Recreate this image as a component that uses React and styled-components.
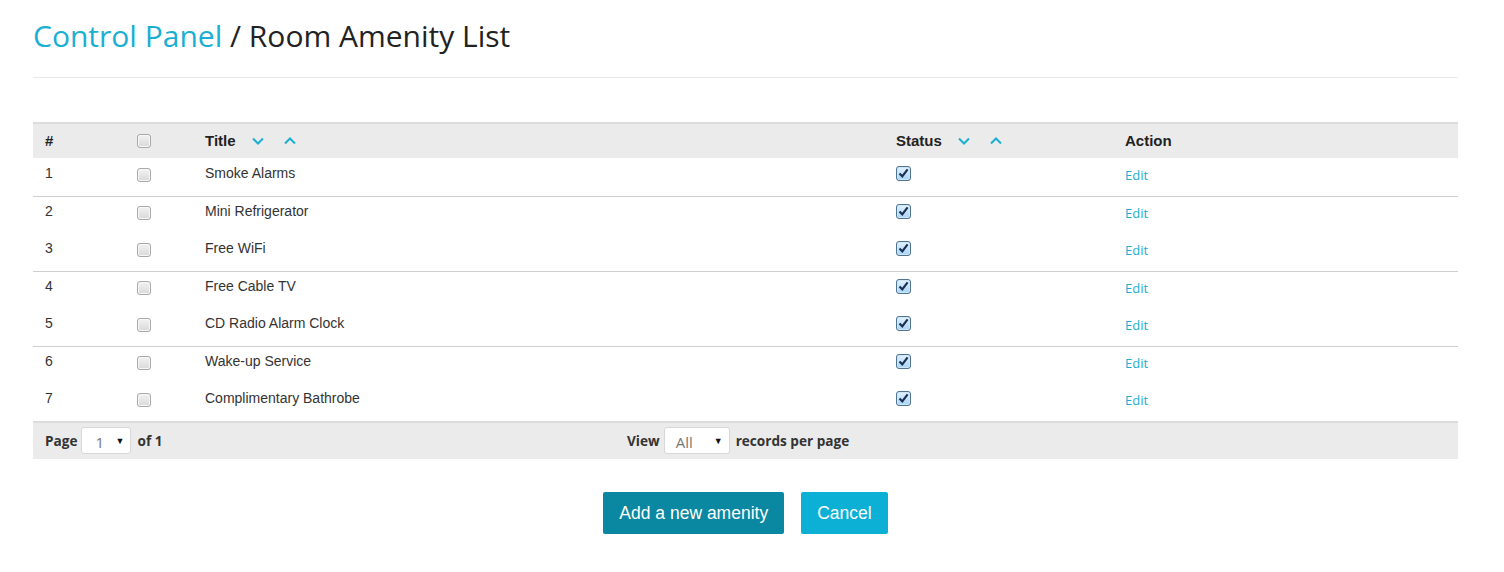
import styled, { createGlobalStyle } from "styled-components";

const GlobalStyle = createGlobalStyle`
  body {
    margin: 0;
    background: #fff;
    font-family: Arial, "Liberation Sans", sans-serif;
    color: #333;
  }
`;

const Page = styled.div`
  padding: 0 46px 0 33px;
`;

const Heading = styled.h1`
  margin: 0;
  padding: 16px 0 21px;
  font-family: "Open Sans", sans-serif;
  font-weight: 400;
  font-size: 30px;
  line-height: 40px;
  color: #222;
  border-bottom: 1px solid #eaeaea;
`;

const Crumb = styled.span`
  color: #1aafd2;
`;

const Grid = styled.table`
  width: 100%;
  margin-top: 44px;
  border-collapse: collapse;
  border-top: 2px solid #dcdcdc;
`;

const HeadRow = styled.tr`
  background: #ebebeb;
  height: 35px;
`;

const Th = styled.th`
  text-align: left;
  padding: 0 12px 1px;
  font-size: 15px;
  font-weight: bold;
  color: #222;
  width: ${(p) => p.$w || "auto"};
`;

const HeadInner = styled.div`
  display: flex;
  align-items: center;
`;

const SortBtn = styled.span`
  display: inline-flex;
  margin-left: ${(p) => p.$gap}px;
  color: #1aafd2;
`;

const Row = styled.tr`
  height: ${(p) => (p.$odd ? 38 : 37)}px;
  border-top: ${(p) => (p.$line ? "1px solid #cfcfcf" : "none")};
`;

const Td = styled.td`
  vertical-align: top;
  padding: ${(p) => (p.$line ? 6 : 7)}px 12px 0;
  font-size: 14px;
  color: #333;
`;

const EditLink = styled.a`
  font-family: "Open Sans", sans-serif;
  font-size: 13px;
  color: #1aafd2;
  text-decoration: none;
  position: relative;
  top: 1px;
`;

const Box = styled.span`
  display: inline-flex;
  align-items: center;
  justify-content: center;
  box-sizing: border-box;
  width: ${(p) => (p.$checked ? 15 : 14)}px;
  height: ${(p) => (p.$checked ? 15 : 14)}px;
  margin-top: ${(p) => p.$top}px;
  border-radius: 3px;
  border: 1px solid ${(p) => (p.$checked ? "#4f7392" : "#a9a9a9")};
  background: ${(p) =>
    p.$checked
      ? "linear-gradient(#e4f2fc, #a6d4f5)"
      : "linear-gradient(#f2f2f2, #d9d9d9)"};
  box-shadow: inset 0 0 0 1px ${(p) => (p.$checked ? "#cde6f8" : "#f7f7f7")};
`;

const Footer = styled.div`
  display: grid;
  grid-template-columns: 582px 1fr;
  align-items: center;
  height: 36px;
  background: #ebebeb;
  border-top: 2px solid #dcdcdc;
  font-family: "Open Sans", sans-serif;
  font-weight: 700;
  font-size: 13.6px;
  color: #333;
`;

const FootCell = styled.div`
  display: flex;
  align-items: center;
  gap: 4px;
  padding: 0 0 2px 12px;
`;

const Select = styled.span`
  display: inline-flex;
  align-items: center;
  justify-content: space-between;
  box-sizing: border-box;
  width: ${(p) => p.$w}px;
  height: 27px;
  margin-right: 2px;
  padding: 3px 6px 0 ${(p) => p.$pl}px;
  background: #fff;
  border: 1px solid #d8d8d8;
  border-radius: 3px;
  font-weight: 400;
  font-size: 15px;
  color: #777;
`;

const Caret = styled.span`
  font-size: 9px;
  color: #111;
  margin-top: -3px;
`;

const Actions = styled.div`
  display: flex;
  justify-content: center;
  gap: 17px;
  margin-top: 33px;
`;

const Button = styled.button`
  height: 42px;
  padding: 0 ${(p) => p.$pad}px;
  border: none;
  border-radius: 2px;
  background: ${(p) => (p.$primary ? "#0a87a1" : "#0bb0d4")};
  color: #fff;
  font-family: Arial, "Liberation Sans", sans-serif;
  font-size: 17.5px;
  cursor: pointer;
`;

function Check({ checked, top = 2 }) {
  return (
    <Box $checked={checked} $top={top}>
      {checked && (
        <svg width="11" height="11" viewBox="0 0 11 11">
          <path d="M1.5 5.5 L4.3 8.4 L9.6 1.4" fill="none" stroke="#1b2f55" strokeWidth="2.2" />
        </svg>
      )}
    </Box>
  );
}

function Chevron({ up, gap }) {
  return (
    <SortBtn $gap={gap}>
      <svg width="12" height="8" viewBox="0 0 12 8">
        <path
          d={up ? "M1 6.5 L6 1.5 L11 6.5" : "M1 1.5 L6 6.5 L11 1.5"}
          fill="none"
          stroke="currentColor"
          strokeWidth="2"
        />
      </svg>
    </SortBtn>
  );
}

const amenities = [
  "Smoke Alarms",
  "Mini Refrigerator",
  "Free WiFi",
  "Free Cable TV",
  "CD Radio Alarm Clock",
  "Wake-up Service",
  "Complimentary Bathrobe",
];

export default function App() {
  return (
    <>
      <GlobalStyle />
      <Page>
        <Heading>
          <Crumb>Control Panel</Crumb> / Room Amenity List
        </Heading>
        <Grid>
          <thead>
            <HeadRow>
              <Th $w="68px">#</Th>
              <Th $w="44px">
                <Check top={3} />
              </Th>
              <Th $w="667px">
                <HeadInner>
                  Title
                  <Chevron gap={16} />
                  <Chevron up gap={20} />
                </HeadInner>
              </Th>
              <Th $w="205px">
                <HeadInner>
                  Status
                  <Chevron gap={16} />
                  <Chevron up gap={20} />
                </HeadInner>
              </Th>
              <Th>Action</Th>
            </HeadRow>
          </thead>
          <tbody>
            {amenities.map((name, i) => {
              const line = i % 2 === 1;
              return (
                <Row key={name} $odd={!line} $line={line}>
                  <Td $line={line}>{i + 1}</Td>
                  <Td $line={line}>
                    <Check top={3} />
                  </Td>
                  <Td $line={line}>{name}</Td>
                  <Td $line={line}>
                    <Check checked top={1} />
                  </Td>
                  <Td $line={line}>
                    <EditLink href="#">Edit</EditLink>
                  </Td>
                </Row>
              );
            })}
          </tbody>
        </Grid>
        <Footer>
          <FootCell>
            Page
            <Select $w={50} $pl={13}>
              1 <Caret>▼</Caret>
            </Select>
            of 1
          </FootCell>
          <FootCell>
            View
            <Select $w={66} $pl={11}>
              All <Caret>▼</Caret>
            </Select>
            records per page
          </FootCell>
        </Footer>
        <Actions>
          <Button $primary $pad={16}>
            Add a new amenity
          </Button>
          <Button $pad={16}>Cancel</Button>
        </Actions>
      </Page>
    </>
  );
}
